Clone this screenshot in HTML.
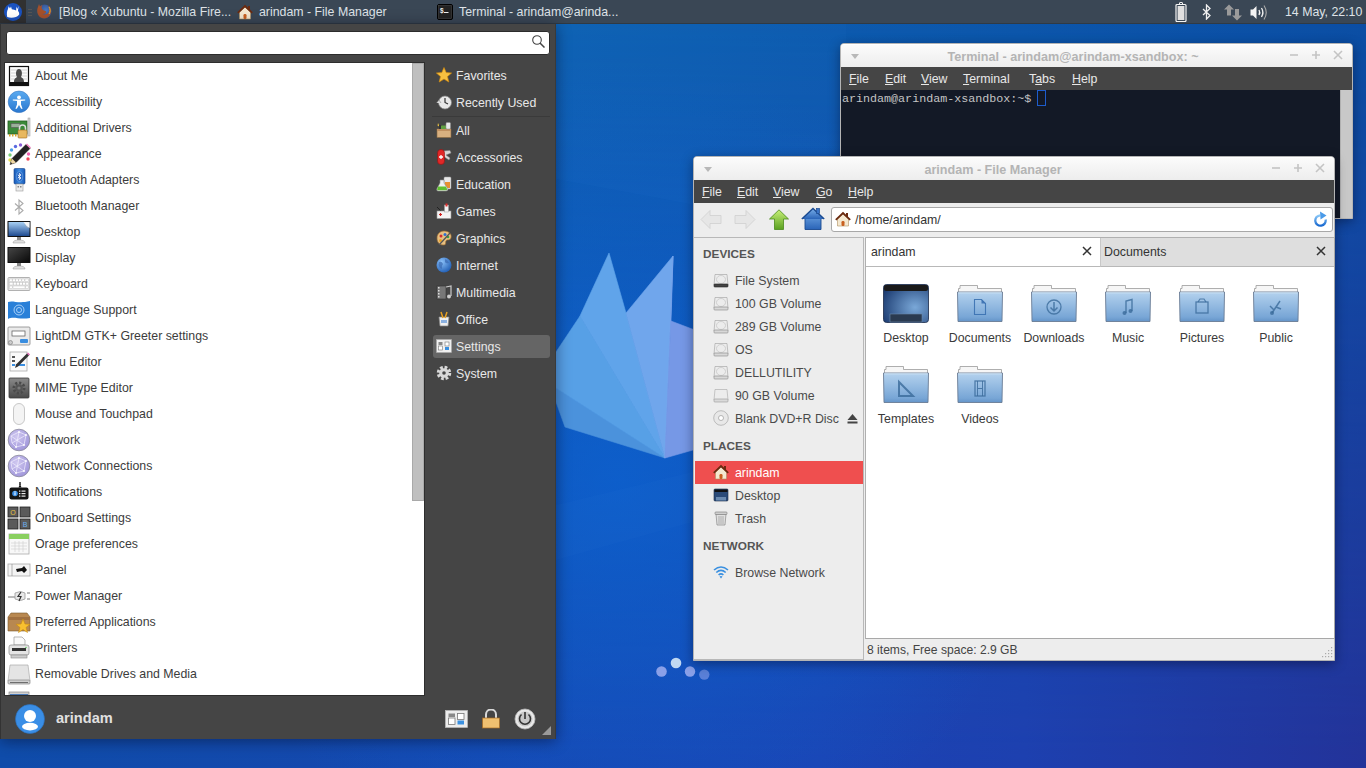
<!DOCTYPE html><html><head><meta charset="utf-8"><style>
*{margin:0;padding:0;box-sizing:border-box}
html,body{width:1366px;height:768px;overflow:hidden}
body{position:relative;font-family:"Liberation Sans",sans-serif;font-size:12.35px;color:#333;
background:linear-gradient(180deg,#0e5fb9 0%,#1260bf 35%,#1b4fb0 70%,#1e3c9c 100%);}
div,span,svg{position:absolute}
.t{white-space:nowrap;line-height:15px}
u{text-decoration:underline;text-decoration-thickness:1px;text-underline-offset:1px}
</style></head><body>
<svg style="left:0;top:0" width="1366" height="768">
 <defs>
  <linearGradient id="bgT" x1="0" y1="0" x2="1" y2="0"><stop offset="0" stop-color="#0e6ebc"/><stop offset="1" stop-color="#0a4fa4"/></linearGradient>
  <linearGradient id="bgB" x1="0" y1="0" x2="1" y2="0"><stop offset="0" stop-color="#104caa"/><stop offset="0.6" stop-color="#1c44b4"/><stop offset="0.75" stop-color="#1e40b0"/><stop offset="1" stop-color="#24339a"/></linearGradient>
  <linearGradient id="mv" x1="0" y1="0" x2="0" y2="1"><stop offset="0" stop-color="#fff"/><stop offset="1" stop-color="#000"/></linearGradient>
  <mask id="mk"><rect width="1366" height="768" fill="url(#mv)"/></mask>
 </defs>
 <rect width="1366" height="768" fill="url(#bgB)"/>
 <rect width="1366" height="768" fill="url(#bgT)" mask="url(#mk)"/>
 <radialGradient id="hl" cx="620" cy="480" r="420" gradientUnits="userSpaceOnUse"><stop offset="0" stop-color="#0a66d8" stop-opacity="0.65"/><stop offset="0.6" stop-color="#0a66d8" stop-opacity="0.25"/><stop offset="1" stop-color="#0a66d8" stop-opacity="0"/></radialGradient>
 <rect width="1366" height="768" fill="url(#hl)"/>
 <polygon points="556,505 700,470 700,520 556,560" fill="#5aa0f0" fill-opacity="0.03"/>
 <path d="M556 24 H846 V235 Q700 205 556 179 Z" fill="#60b0ff" fill-opacity="0.035"/>
 <g stroke-width="0.6" stroke-linejoin="round">
  <polygon points="665,458 565,427 556,402 556,388" fill="#4b92dc" stroke="#4b92dc"/>
  <polygon points="665,458 556,388 556,352 580,316" fill="#57a0e6" stroke="#57a0e6"/>
  <polygon points="665,458 580,316 609,253 626,313" fill="#60a4ea" stroke="#60a4ea"/>
  <polygon points="665,458 626,313 673,256" fill="#70a6ec" stroke="#70a6ec"/>
  <polygon points="665,458 673,256 671,321" fill="#7aa4ec" stroke="#7aa4ec"/>
  <polygon points="665,458 671,321 700,332 700,448" fill="#7698e6" stroke="#7698e6"/>
 </g>
 <circle cx="661.5" cy="671.5" r="5.3" fill="#8aa0e8"/>
 <circle cx="676" cy="663" r="5.3" fill="#c0d8f2"/>
 <circle cx="690" cy="671.5" r="5.2" fill="#8aa0e8"/>
 <circle cx="704.3" cy="674.6" r="5.2" fill="#5a80d8"/>
</svg>
<div style="left:0;top:0;width:1366px;height:24px;background:#3a4755;border-bottom:1px solid #2f3a45"></div>
<div style="left:0;top:0;width:26px;height:23px;background:#313131"></div>
<svg width="18" height="18" viewBox="0 0 18 18" style="position:absolute;left:4px;top:3px"><circle cx="9" cy="9" r="9" fill="#1a52c0"/><path d="M3.2 14 C2.5 10.5 3 7.5 4 6 L4.6 3.2 L6 5.6 L7 3.4 L7.8 6.2 C9.5 6.4 11 7 12.2 7.6 L12.3 3.6 L13.3 6 L14.6 3 L14 8 C15 9 15.4 10.4 15.2 11.5 C13 14.5 7.5 15.8 3.2 14 Z" fill="#fff"/></svg>
<div style="left:28px;top:9px;width:4px;height:1px;background:#555;box-shadow:0 3px 0 #555,0 6px 0 #555"></div>
<svg width="17" height="17" viewBox="0 0 17 17" style="position:absolute;left:36px;top:3px"><defs><radialGradient id="ffg" cx="0.6" cy="0.4" r="0.6"><stop offset="0" stop-color="#4a78c0"/><stop offset="1" stop-color="#2a4a8a"/></radialGradient></defs><circle cx="8.5" cy="8.5" r="7" fill="url(#ffg)"/><path d="M12.5 2.5 C15.5 4.5 16 9 14 12 C12 15.5 7 16.5 4 14 C1 11.5 0.5 7 2 4 L3 1 L4 3.5 C4.5 3 5.5 2.2 6.5 2 C5 4 5.5 6 7 7 C8 8 9.5 7.5 10 8.5 C10.5 10 8.5 11.5 6.5 11 C9 12.5 12.5 11 13 8.5 C13.5 6 12.5 4 12.5 2.5 Z" fill="#a4502a"/><path d="M13 4 C14.5 6 14.5 9 13 11" stroke="#d8b040" stroke-width="1" fill="none"/></svg>
<svg width="16" height="16" viewBox="0 0 16 16" style="position:absolute;left:237px;top:4px"><path d="M2.5 8 V15 H13.5 V8 L8 3 Z" fill="#f4e8d0" stroke="#b09060" stroke-width="0.6"/><path d="M0.8 8.8 L8 2 L15.2 8.8" stroke="#6a2a10" stroke-width="1.8" fill="none"/><rect x="11" y="2" width="2" height="4" fill="#6a2a10"/><rect x="6.5" y="10" width="3" height="5" rx="1.2" fill="#c86020"/></svg>
<svg width="16" height="16" viewBox="0 0 16 16" style="position:absolute;left:437px;top:4px"><rect x="0.5" y="0.5" width="15" height="15" rx="1.5" fill="#1a1a1a" stroke="#000" stroke-width="1"/><rect x="1.5" y="1.5" width="13" height="13" fill="#222" stroke="#555" stroke-width="0.4"/><text x="3" y="8.5" font-size="6.5" fill="#eee" font-family="Liberation Sans" font-weight="bold">$</text><rect x="7" y="8" width="4.5" height="1" fill="#eee"/></svg>
<div class="t" style="left:59px;top:5px;color:#dfe3e8">[Blog « Xubuntu - Mozilla Fire...</div>
<div class="t" style="left:259px;top:5px;color:#dfe3e8">arindam - File Manager</div>
<div class="t" style="left:459px;top:5px;color:#dfe3e8">Terminal - arindam@arinda...</div>
<div class="t" style="left:1285px;top:5px;color:#dfe3e8">14 May, 22:10</div>
<svg width="12" height="20" viewBox="0 0 12 20" style="position:absolute;left:1175px;top:2px"><rect x="4.5" y="0.5" width="3" height="2" rx="0.5" fill="none" stroke="#f0f0f0" stroke-width="1"/><rect x="1" y="2.5" width="10" height="17" rx="1" fill="none" stroke="#f4f4f4" stroke-width="1.2"/><rect x="2.6" y="4" width="6.8" height="14" fill="#e0e0e0"/></svg>
<svg width="10" height="16" viewBox="0 0 10 16" style="position:absolute;left:1202px;top:4px"><path d="M1 5 L8 11.5 L4.5 15 V1 L8 4.5 L1 11" stroke="#f0f0f0" stroke-width="1.3" fill="none"/></svg>
<svg width="18" height="17" viewBox="0 0 18 17" style="position:absolute;left:1224px;top:4px"><path d="M5 0.5 L10 5.5 H7 V11.5 H3 V5.5 H0 Z" fill="#9a9a9a"/><path d="M13 16.5 L8 11.5 H11 V5 H15 V11.5 H18 Z" fill="#9a9a9a"/></svg>
<svg width="19" height="17" viewBox="0 0 19 17" style="position:absolute;left:1250px;top:4px"><path d="M0.5 5.5 H3 L6.5 2 V15 L3 11.5 H0.5 Z" fill="#f4f4f4"/><path d="M9 6 Q10.5 8.5 9 11" stroke="#f4f4f4" stroke-width="1.4" fill="none"/><path d="M11.5 4 Q14.3 8.5 11.5 13" stroke="#f0f0f0" stroke-width="1.3" fill="none"/><path d="M14 1.5 Q18.5 8.5 14 15.5" stroke="#aaa" stroke-width="1.1" fill="none"/></svg>
<div style="left:0;top:24px;width:556px;height:715px;background:#454545;border-left:1px solid #333;border-right:1px solid #3a3a3a;box-shadow:0 2px 14px rgba(0,0,20,0.45)"></div>
<div style="left:6px;top:31px;width:544px;height:24px;background:#fff;border:1px solid #2c2c2c;border-radius:3px"></div>
<svg width="14" height="14" style="left:531px;top:35px"><circle cx="6" cy="5" r="4.3" fill="none" stroke="#444" stroke-width="1.1"/><path d="M9 8 L13.5 12.5" stroke="#444" stroke-width="1.5"/></svg>
<div style="left:4px;top:62px;width:421px;height:634px;background:#fff;border:1px solid #2e2e2e"></div>
<div style="left:412px;top:63px;width:12px;height:438px;background:#bfbfbf;border:1px solid #a9a9a9"></div>
<div style="left:5px;top:63px;width:407px;height:632px;overflow:hidden">
<svg width="24" height="24" viewBox="0 0 24 24" style="position:absolute;left:2px;top:1px"><rect x="2.5" y="2.5" width="19" height="19" fill="#fafafa" stroke="#111" stroke-width="1.2"/>
<g stroke="#c8c8c8" stroke-width="0.8"><line x1="4" y1="6" x2="20" y2="6"/><line x1="4" y1="9" x2="20" y2="9"/><line x1="4" y1="12" x2="20" y2="12"/><line x1="4" y1="15" x2="20" y2="15"/></g>
<path d="M7 18 C7 14 9 14 10 13 C8.5 11 8.5 5 12 5 C15.5 5 15.5 11 14 13 C15 14 17 14 17 18 Z" fill="#4a4a4a"/>
<rect x="3" y="18" width="18" height="3.5" fill="#111"/></svg>
<div class="t" style="left:30px;top:6px;color:#3c3c3c">About Me</div>
<svg width="24" height="24" viewBox="0 0 24 24" style="position:absolute;left:2px;top:27px"><defs><linearGradient id="acg" x1="0" y1="0" x2="0" y2="1"><stop offset="0" stop-color="#5aaaf0"/><stop offset="1" stop-color="#2a78d0"/></linearGradient></defs>
<circle cx="12" cy="11.8" r="10.8" fill="url(#acg)" stroke="#2a6ab8" stroke-width="0.5"/>
<circle cx="12" cy="7.3" r="1.9" fill="#fff"/>
<path d="M5.8 9.6 L11 9.6 L13 9.6 L18.2 9.6 L18.2 10.6 L14 11 L14 14.5 L15.6 18.8 L14.2 18.8 L12 15 L9.8 18.8 L8.4 18.8 L10 14.5 L10 11 L5.8 10.6 Z" fill="#fff"/></svg>
<div class="t" style="left:30px;top:32px;color:#3c3c3c">Accessibility</div>
<svg width="24" height="24" viewBox="0 0 24 24" style="position:absolute;left:2px;top:53px"><rect x="1" y="5" width="19" height="13" fill="#3c8a3a" stroke="#245c22" stroke-width="0.8"/>
<rect x="4" y="7.5" width="9" height="4" fill="#9ab09a" stroke="#555" stroke-width="0.6"/>
<rect x="21" y="2" width="2" height="18" fill="#d8d8d8" stroke="#999" stroke-width="0.5"/>
<g fill="#d6a830"><rect x="2" y="18" width="1.5" height="2.5"/><rect x="5" y="18" width="1.5" height="2.5"/><rect x="8" y="18" width="1.5" height="2.5"/></g>
<path d="M12.5 14 V12 A3 3 0 0 1 18.5 12 V14" stroke="#ddd" stroke-width="1.5" fill="none"/>
<rect x="11" y="14" width="9" height="8" rx="1" fill="#e8b860" stroke="#a06a20" stroke-width="0.6"/></svg>
<div class="t" style="left:30px;top:58px;color:#3c3c3c">Additional Drivers</div>
<svg width="24" height="24" viewBox="0 0 24 24" style="position:absolute;left:2px;top:79px"><g><circle cx="3" cy="13" r="1.7" fill="#7ad07a"/><circle cx="4.5" cy="8" r="1.7" fill="#4da0e8"/><circle cx="8.5" cy="4.5" r="1.7" fill="#5a6ae0"/><circle cx="3" cy="18" r="1.7" fill="#e8e050"/><circle cx="21.5" cy="12" r="1.7" fill="#f060b0"/><circle cx="21" cy="17" r="1.7" fill="#f04858"/><circle cx="13.5" cy="3" r="1.7" fill="#8a60d8"/></g>
<path d="M3 22.5 L5 16.5 L19 2.5 L23 6.5 L9 20.5 Z" fill="#222" stroke="#111" stroke-width="0.5"/>
<path d="M19 2.5 L23 6.5 L24 5.5 L20 1.5 Z" fill="#f080c0"/>
<path d="M3 22.5 L5 16.5 L9 20.5 Z" fill="#f0d8a8"/><path d="M3 22.5 L3.8 20 L5.5 21.7 Z" fill="#333"/></svg>
<div class="t" style="left:30px;top:84px;color:#3c3c3c">Appearance</div>
<svg width="24" height="24" viewBox="0 0 24 24" style="position:absolute;left:2px;top:105px"><defs><linearGradient id="bta" x1="0" y1="0" x2="1" y2="0"><stop offset="0" stop-color="#1a5ab8"/><stop offset="0.5" stop-color="#3a8ae0"/><stop offset="1" stop-color="#1a5ab8"/></linearGradient></defs>
<rect x="7" y="0.5" width="11" height="15.5" rx="1.2" fill="url(#bta)" stroke="#12428a" stroke-width="0.6"/>
<rect x="9" y="16" width="7" height="7" fill="#ececec" stroke="#999" stroke-width="0.6"/><rect x="10.5" y="18" width="1.5" height="1.5" fill="#888"/><rect x="13" y="18" width="1.5" height="1.5" fill="#888"/>
<ellipse cx="12.5" cy="8.5" rx="3.2" ry="4.8" fill="#2a6ac8" stroke="#9ac4f0" stroke-width="0.4"/>
<path d="M10.8 6.8 L14 10 L12.4 11.6 V5.4 L14 7 L10.8 10.2" stroke="#fff" stroke-width="0.8" fill="none"/></svg>
<div class="t" style="left:30px;top:110px;color:#3c3c3c">Bluetooth Adapters</div>
<svg width="24" height="24" viewBox="0 0 24 24" style="position:absolute;left:2px;top:131px"><path d="M8 9.5 L16 16.5 L12 20 V6 L16 9.5 L8 16.5" stroke="#aaa" stroke-width="1.1" fill="none"/></svg>
<div class="t" style="left:30px;top:136px;color:#3c3c3c">Bluetooth Manager</div>
<svg width="24" height="24" viewBox="0 0 24 24" style="position:absolute;left:2px;top:157px"><defs><linearGradient id="dkg" x1="0" y1="0" x2="0" y2="1"><stop offset="0" stop-color="#a8d0f4"/><stop offset="1" stop-color="#1e4a90"/></linearGradient></defs>
<rect x="0.5" y="1" width="23" height="16" rx="0.5" fill="#111"/>
<rect x="1.5" y="2" width="21" height="14" fill="url(#dkg)"/>
<path d="M16.5 2 H22.5 V8 Q19 6 16.5 2 Z" fill="#f4f4f4"/><path d="M16.5 2 Q17.5 6.5 22.5 8 Q18 8 16.5 2Z" fill="#aaa"/>
<rect x="10" y="17" width="4" height="3" fill="#888"/><path d="M6 23 Q6 20 12 20 Q18 20 18 23 Z" fill="#e0e0e0" stroke="#999" stroke-width="0.5"/></svg>
<div class="t" style="left:30px;top:162px;color:#3c3c3c">Desktop</div>
<svg width="24" height="24" viewBox="0 0 24 24" style="position:absolute;left:2px;top:183px"><defs><linearGradient id="dpg" x1="0" y1="0" x2="1" y2="1"><stop offset="0" stop-color="#444"/><stop offset="1" stop-color="#0a0a0a"/></linearGradient></defs>
<rect x="0.5" y="1" width="23" height="16" rx="0.5" fill="#111"/>
<rect x="1.5" y="2" width="21" height="14" fill="url(#dpg)"/>
<rect x="10" y="17" width="4" height="3" fill="#888"/><path d="M6 23 Q6 20 12 20 Q18 20 18 23 Z" fill="#e0e0e0" stroke="#999" stroke-width="0.5"/></svg>
<div class="t" style="left:30px;top:188px;color:#3c3c3c">Display</div>
<svg width="24" height="24" viewBox="0 0 24 24" style="position:absolute;left:2px;top:209px"><rect x="1" y="5.5" width="22" height="13" rx="1" fill="#e8e8e8" stroke="#a0a0a0" stroke-width="0.8"/>
<g fill="#fff" stroke="#bbb" stroke-width="0.4"><rect x="2.5" y="7" width="2.6" height="2.5"/><rect x="5.6" y="7" width="2.6" height="2.5"/><rect x="8.7" y="7" width="2.6" height="2.5"/><rect x="11.8" y="7" width="2.6" height="2.5"/><rect x="14.9" y="7" width="2.6" height="2.5"/><rect x="18" y="7" width="3.5" height="2.5"/>
<rect x="2.5" y="10.5" width="3.5" height="2.5"/><rect x="6.5" y="10.5" width="2.6" height="2.5"/><rect x="9.6" y="10.5" width="2.6" height="2.5"/><rect x="12.7" y="10.5" width="2.6" height="2.5"/><rect x="15.8" y="10.5" width="2.6" height="2.5"/><rect x="18.9" y="10.5" width="2.6" height="2.5"/>
<rect x="2.5" y="14" width="3" height="2.5"/><rect x="6" y="14" width="12" height="2.5"/><rect x="18.5" y="14" width="3" height="2.5"/></g></svg>
<div class="t" style="left:30px;top:214px;color:#3c3c3c">Keyboard</div>
<svg width="24" height="24" viewBox="0 0 24 24" style="position:absolute;left:2px;top:235px"><path d="M1 4 C6 2 11 6 23 3 V20 C12 22 7 18 1 21 Z" fill="#2a80d8"/>
<circle cx="12" cy="12" r="5" fill="none" stroke="#a8d0f8" stroke-width="1"/><circle cx="12" cy="12" r="2.5" fill="none" stroke="#a8d0f8" stroke-width="1"/></svg>
<div class="t" style="left:30px;top:240px;color:#3c3c3c">Language Support</div>
<svg width="24" height="24" viewBox="0 0 24 24" style="position:absolute;left:2px;top:261px"><rect x="1" y="3" width="22" height="18" rx="1" fill="#eaeaea" stroke="#888" stroke-width="0.8"/>
<rect x="5" y="7" width="13" height="5" fill="#fff" stroke="#555" stroke-width="0.7"/>
<rect x="13" y="15" width="8" height="4" rx="1" fill="#3a8ee0"/>
<circle cx="3.5" cy="18.5" r="2" fill="#ccc" stroke="#777" stroke-width="0.6"/></svg>
<div class="t" style="left:30px;top:266px;color:#3c3c3c">LightDM GTK+ Greeter settings</div>
<svg width="24" height="24" viewBox="0 0 24 24" style="position:absolute;left:2px;top:287px"><rect x="3" y="2" width="17" height="19" fill="#fafafa" stroke="#aaa" stroke-width="0.8"/>
<g fill="#555"><rect x="5" y="6" width="3" height="2"/><rect x="5" y="10" width="3" height="2"/></g>
<rect x="5" y="14" width="3" height="2" fill="#3a8ee0"/><rect x="9" y="14" width="9" height="2" fill="#3a8ee0"/>
<path d="M8 18 L9 14.5 L20 3.5 L22 5.5 L11 16.5 Z" fill="#333"/><path d="M20 3.5 L22 5.5 L23 4.5 L21 2.5 Z" fill="#e060b0"/></svg>
<div class="t" style="left:30px;top:292px;color:#3c3c3c">Menu Editor</div>
<svg width="24" height="24" viewBox="0 0 24 24" style="position:absolute;left:2px;top:313px"><defs><linearGradient id="mmg" x1="0" y1="0" x2="0" y2="1"><stop offset="0" stop-color="#8a8a8a"/><stop offset="1" stop-color="#4a4a4a"/></linearGradient></defs>
<rect x="2" y="2" width="20" height="20" rx="1" fill="url(#mmg)" stroke="#3a3a3a" stroke-width="0.8"/>
<circle cx="12" cy="12" r="5.2" fill="none" stroke="#4a4a4a" stroke-width="2.6" stroke-dasharray="2.1 1.9"/><circle cx="12" cy="12" r="3.8" fill="#555"/><circle cx="12" cy="12" r="1.6" fill="#7a7a7a"/></svg>
<div class="t" style="left:30px;top:318px;color:#3c3c3c">MIME Type Editor</div>
<svg width="24" height="24" viewBox="0 0 24 24" style="position:absolute;left:2px;top:339px"><rect x="6.5" y="1.5" width="11" height="21" rx="5.5" fill="#f4f4f4" stroke="#bbb" stroke-width="0.8"/></svg>
<div class="t" style="left:30px;top:344px;color:#3c3c3c">Mouse and Touchpad</div>
<svg width="24" height="24" viewBox="0 0 24 24" style="position:absolute;left:2px;top:365px"><defs><radialGradient id="ng1" cx="0.4" cy="0.35" r="0.75"><stop offset="0" stop-color="#d0c8f0"/><stop offset="1" stop-color="#9a90d8"/></radialGradient></defs>
<circle cx="12" cy="12" r="10.8" fill="url(#ng1)" stroke="#8a8a9a" stroke-width="0.8"/>
<g stroke="#f4f2ff" stroke-width="0.7" fill="none" opacity="0.95"><path d="M4 8 L12 4 L19 7 L17 17 L9 19 L5 15 Z"/><path d="M12 4 L9 19 M19 7 L5 15 M4 8 L17 17"/></g><g fill="#fff"><circle cx="12" cy="4" r="0.9"/><circle cx="19" cy="7" r="0.9"/><circle cx="17" cy="17" r="0.9"/><circle cx="9" cy="19" r="0.9"/></g></svg>
<div class="t" style="left:30px;top:370px;color:#3c3c3c">Network</div>
<svg width="24" height="24" viewBox="0 0 24 24" style="position:absolute;left:2px;top:391px"><defs><radialGradient id="ng2" cx="0.4" cy="0.35" r="0.75"><stop offset="0" stop-color="#d0c8f0"/><stop offset="1" stop-color="#9a90d8"/></radialGradient></defs>
<circle cx="12" cy="12" r="10.8" fill="url(#ng2)" stroke="#8a8a9a" stroke-width="0.8"/>
<g stroke="#f4f2ff" stroke-width="0.7" fill="none" opacity="0.95"><path d="M4 8 L12 4 L19 7 L17 17 L9 19 L5 15 Z"/><path d="M12 4 L9 19 M19 7 L5 15 M4 8 L17 17"/></g><g fill="#fff"><circle cx="12" cy="4" r="0.9"/><circle cx="19" cy="7" r="0.9"/><circle cx="17" cy="17" r="0.9"/><circle cx="9" cy="19" r="0.9"/></g></svg>
<div class="t" style="left:30px;top:396px;color:#3c3c3c">Network Connections</div>
<svg width="24" height="24" viewBox="0 0 24 24" style="position:absolute;left:2px;top:417px"><rect x="2.5" y="7.5" width="19" height="12" rx="2" fill="#141414"/>
<path d="M13 4 L14.5 7.5 H11.5 Z" fill="#141414"/><rect x="12.3" y="2" width="1.4" height="3" fill="#141414"/>
<circle cx="8" cy="13.5" r="2.8" fill="#3a90e8"/><rect x="7.5" y="12.3" width="1" height="3" fill="#fff"/><rect x="7.5" y="11.2" width="1" height="0.8" fill="#fff"/>
<g fill="#e8e8e8"><rect x="12" y="10.5" width="1.4" height="1.2"/><rect x="14.5" y="10.5" width="4" height="1.2"/><rect x="12" y="13" width="1.4" height="1.2"/><rect x="14.5" y="13" width="4" height="1.2"/><rect x="12" y="15.5" width="1.4" height="1.2"/><rect x="14.5" y="15.5" width="4" height="1.2"/></g></svg>
<div class="t" style="left:30px;top:422px;color:#3c3c3c">Notifications</div>
<svg width="24" height="24" viewBox="0 0 24 24" style="position:absolute;left:2px;top:443px"><g stroke="#222" stroke-width="0.8"><rect x="1" y="1" width="10" height="10" fill="#5a5a5a"/><rect x="13" y="1" width="10" height="10" fill="#5a5a5a"/><rect x="1" y="13" width="10" height="10" fill="#5a5a5a"/><rect x="13" y="13" width="10" height="10" fill="#5a5a5a"/></g>
<text x="6" y="9" font-size="7" fill="#e8c040" text-anchor="middle" font-family="Liberation Sans">O</text><text x="18" y="21" font-size="7" fill="#6ab0f0" text-anchor="middle" font-family="Liberation Sans">B</text></svg>
<div class="t" style="left:30px;top:448px;color:#3c3c3c">Onboard Settings</div>
<svg width="24" height="24" viewBox="0 0 24 24" style="position:absolute;left:2px;top:469px"><rect x="2" y="2" width="20" height="20" fill="#f8f8f8" stroke="#aaa" stroke-width="0.8"/><rect x="2" y="2" width="20" height="5" fill="#8ad060"/>
<g stroke="#ccc" stroke-width="0.6"><line x1="4" y1="11" x2="20" y2="11"/><line x1="4" y1="14" x2="20" y2="14"/><line x1="4" y1="17" x2="20" y2="17"/><line x1="8" y1="9" x2="8" y2="20"/><line x1="12" y1="9" x2="12" y2="20"/><line x1="16" y1="9" x2="16" y2="20"/></g></svg>
<div class="t" style="left:30px;top:474px;color:#3c3c3c">Orage preferences</div>
<svg width="24" height="24" viewBox="0 0 24 24" style="position:absolute;left:2px;top:495px"><rect x="1" y="6" width="22" height="12" fill="#f4f4f4" stroke="#aaa" stroke-width="0.8"/><line x1="5" y1="6" x2="5" y2="18" stroke="#888" stroke-width="0.6"/>
<path d="M9 11 L15 10 L17 8 L20 12 L17 15 L15 13 L10 14 Z" fill="#111"/></svg>
<div class="t" style="left:30px;top:500px;color:#3c3c3c">Panel</div>
<svg width="24" height="24" viewBox="0 0 24 24" style="position:absolute;left:2px;top:521px"><path d="M1 13 H8 M20 9 H23 M20 15 H23" stroke="#777" stroke-width="1"/><path d="M8 9 Q14 6 18 9 V15 Q14 18 8 15 Z" fill="#e8e8e8" stroke="#999" stroke-width="0.8"/><path d="M14 8 L11 12.5 H14 L12 17" stroke="#333" stroke-width="1.2" fill="none"/></svg>
<div class="t" style="left:30px;top:526px;color:#3c3c3c">Power Manager</div>
<svg width="24" height="24" viewBox="0 0 24 24" style="position:absolute;left:2px;top:547px"><path d="M1 7 L4 3 H20 L23 7 V21 H1 Z" fill="#b88850" stroke="#7a5a30" stroke-width="0.6"/><rect x="1" y="7" width="22" height="3" fill="#a07040"/>
<path d="M16 9 L18 14 L23 14.3 L19 17.5 L20.5 22.5 L16 19.5 L11.5 22.5 L13 17.5 L9 14.3 L14 14 Z" fill="#f8c030" stroke="#c88a10" stroke-width="0.6"/></svg>
<div class="t" style="left:30px;top:552px;color:#3c3c3c">Preferred Applications</div>
<svg width="24" height="24" viewBox="0 0 24 24" style="position:absolute;left:2px;top:573px"><path d="M7 1 H15 L18 4 V9 H7 Z" fill="#fafafa" stroke="#999" stroke-width="0.7"/><rect x="2" y="9" width="20" height="10" rx="2" fill="#e4e4e4" stroke="#888" stroke-width="0.7"/><rect x="5" y="12" width="14" height="3" fill="#333"/><rect x="4" y="19" width="16" height="3" fill="#ccc" stroke="#888" stroke-width="0.6"/><circle cx="19" cy="11.5" r="0.8" fill="#6c6"/></svg>
<div class="t" style="left:30px;top:578px;color:#3c3c3c">Printers</div>
<svg width="24" height="24" viewBox="0 0 24 24" style="position:absolute;left:2px;top:599px"><path d="M3 3 H21 L23 19 H1 Z" fill="#e4e4e4" stroke="#aaa" stroke-width="0.7"/><rect x="1" y="18" width="22" height="4" rx="1" fill="#d0d0d0" stroke="#888" stroke-width="0.7"/><rect x="3" y="20" width="18" height="0.8" fill="#555"/></svg>
<div class="t" style="left:30px;top:604px;color:#3c3c3c">Removable Drives and Media</div>
<svg width="24" height="24" viewBox="0 0 24 24" style="position:absolute;left:2px;top:625px"><rect x="2" y="4" width="20" height="16" fill="#d0d0d0" stroke="#888" stroke-width="0.7"/><rect x="3" y="6" width="18" height="12" fill="#4a7ab8"/></svg>
</div>
<div style="left:432px;top:116px;width:118px;height:1px;background:#3a3a3a"></div>
<div style="left:433px;top:335px;width:117px;height:23px;background:#656565;border-radius:3px"></div>
<svg width="16" height="16" viewBox="0 0 16 16" style="position:absolute;left:436px;top:67px"><path d="M8 0.5 L10.2 5.6 L15.6 6 L11.5 9.6 L12.8 15 L8 12.1 L3.2 15 L4.5 9.6 L0.4 6 L5.8 5.6 Z" fill="#f8c040" stroke="#d08a10" stroke-width="0.7"/></svg>
<div class="t" style="left:456px;top:69px;color:#e8e8e8">Favorites</div>
<svg width="16" height="16" viewBox="0 0 16 16" style="position:absolute;left:436px;top:94px"><circle cx="9" cy="8.5" r="6.5" fill="#e8e8e8" stroke="#888" stroke-width="0.7"/><path d="M9 4 V8.5 L12 10" stroke="#333" stroke-width="1.2" fill="none"/><path d="M0.5 9 L3 6 L5 9" fill="#ddd" stroke="#777" stroke-width="0.5"/></svg>
<div class="t" style="left:456px;top:96px;color:#e8e8e8">Recently Used</div>
<svg width="16" height="16" viewBox="0 0 16 16" style="position:absolute;left:436px;top:122px"><rect x="1" y="7" width="14" height="8.5" fill="#d8b080" stroke="#8a6a40" stroke-width="0.6"/><rect x="1" y="7" width="14" height="2" fill="#c09060"/><path d="M2 1 L4 5 L1.5 3.5 Z" fill="#e8c040"/><rect x="3" y="3" width="3" height="4" fill="#333"/><rect x="5" y="3.5" width="5" height="3.5" fill="#60a040"/><rect x="10" y="0.5" width="4.5" height="6.5" rx="1" fill="#e8e8e8" stroke="#888" stroke-width="0.5"/></svg>
<div class="t" style="left:456px;top:124px;color:#e8e8e8">All</div>
<svg width="16" height="16" viewBox="0 0 16 16" style="position:absolute;left:436px;top:149px"><path d="M7 2 L14 1.5 L15 4 L10 6 L14 9 L13 11 L7 7 Z" fill="#d8d8d8" stroke="#888" stroke-width="0.5"/><rect x="1.5" y="0.5" width="7" height="15" rx="3.5" fill="#e02828" stroke="#901010" stroke-width="0.6"/><path d="M5 6 V10 M3 8 H7" stroke="#fff" stroke-width="1.3"/></svg>
<div class="t" style="left:456px;top:151px;color:#e8e8e8">Accessories</div>
<svg width="16" height="16" viewBox="0 0 16 16" style="position:absolute;left:436px;top:176px"><rect x="8" y="1" width="7" height="12" rx="1" fill="#e8e8e8" stroke="#999" stroke-width="0.5"/><rect x="9" y="6" width="5" height="6" fill="#e89030"/><path d="M4 4 H8 V7 L12 13 Q12 15 10 15 H2 Q0.5 15 0.8 13 L4 7 Z" fill="#f0f0f0" stroke="#888" stroke-width="0.6"/><path d="M2.2 10.5 H9.8 L11.2 13.3 Q11 14.3 10 14.3 H2 Q1.2 14.3 1.2 13.3 Z" fill="#60c030"/></svg>
<div class="t" style="left:456px;top:178px;color:#e8e8e8">Education</div>
<svg width="16" height="16" viewBox="0 0 16 16" style="position:absolute;left:436px;top:203px"><path d="M1 4 L6 9" stroke="#222" stroke-width="1"/><rect x="1" y="8" width="14" height="7.5" fill="#f4f4f4" stroke="#999" stroke-width="0.6"/><rect x="8.5" y="2" width="4" height="7" fill="#f4f4f4" stroke="#999" stroke-width="0.5"/><rect x="9.5" y="0.5" width="2" height="3" fill="#e03030"/><path d="M4.5 10 V13 M3 11.5 H6" stroke="#d02020" stroke-width="1.2"/></svg>
<div class="t" style="left:456px;top:205px;color:#e8e8e8">Games</div>
<svg width="16" height="16" viewBox="0 0 16 16" style="position:absolute;left:436px;top:230px"><path d="M8 1 C14 1 16 5 15 8 C14 11 11 9 10 11 C9 13 11 15 7 15 C3 15 1 12 1 8 C1 4 4 1 8 1 Z" fill="#e8c080" stroke="#9a6a30" stroke-width="0.7"/><circle cx="5" cy="6" r="1.5" fill="#d03030"/><circle cx="9" cy="4.5" r="1.5" fill="#3070d0"/><circle cx="12" cy="7" r="1.3" fill="#40a040"/><circle cx="4.5" cy="10.5" r="1.5" fill="#e8a020"/><path d="M3 15 L14 3" stroke="#555" stroke-width="1.3"/></svg>
<div class="t" style="left:456px;top:232px;color:#e8e8e8">Graphics</div>
<svg width="16" height="16" viewBox="0 0 16 16" style="position:absolute;left:436px;top:257px"><defs><radialGradient id="ig" cx="0.35" cy="0.3" r="0.8"><stop offset="0" stop-color="#8ac0f8"/><stop offset="1" stop-color="#1a58b0"/></radialGradient></defs><circle cx="8" cy="8" r="7.5" fill="url(#ig)"/><path d="M3 5 Q6 4 7 7 Q5 9 6 12 Q3 11 2.5 8 Z M9 2 Q12 3 13 6 Q10 7 9 5 Z" fill="#3a6ab0" opacity="0.7"/></svg>
<div class="t" style="left:456px;top:259px;color:#e8e8e8">Internet</div>
<svg width="16" height="16" viewBox="0 0 16 16" style="position:absolute;left:436px;top:284px"><rect x="1" y="2" width="9" height="13" fill="#777" stroke="#333" stroke-width="0.6"/><g fill="#ddd"><rect x="2" y="3" width="1.5" height="1.5"/><rect x="2" y="6" width="1.5" height="1.5"/><rect x="2" y="9" width="1.5" height="1.5"/><rect x="2" y="12" width="1.5" height="1.5"/></g><path d="M10 3 L15 2 V12" stroke="#ccc" stroke-width="1.2" fill="none"/><circle cx="13" cy="12.5" r="2" fill="#ccc"/></svg>
<div class="t" style="left:456px;top:286px;color:#e8e8e8">Multimedia</div>
<svg width="16" height="16" viewBox="0 0 16 16" style="position:absolute;left:436px;top:311px"><path d="M3 6 H13 L12 15 H4 Z" fill="#eee" stroke="#888" stroke-width="0.7"/><path d="M5 1 L7 7 M11 1 L9 7" stroke="#e8a020" stroke-width="1.5"/><rect x="5" y="9" width="6" height="3" fill="#8ab0e0"/></svg>
<div class="t" style="left:456px;top:313px;color:#e8e8e8">Office</div>
<svg width="16" height="16" viewBox="0 0 16 16" style="position:absolute;left:436px;top:338px"><rect x="0.5" y="1.5" width="15" height="13" fill="#f0f0f0" stroke="#aaa" stroke-width="0.6"/><rect x="2.5" y="4" width="4" height="3" fill="#888"/><rect x="2.5" y="8" width="4" height="4" fill="#fff" stroke="#777" stroke-width="0.6"/><rect x="9" y="4" width="4" height="4" fill="#fff" stroke="#777" stroke-width="0.6"/><rect x="9" y="9" width="4" height="3" fill="#3a90e0"/></svg>
<div class="t" style="left:456px;top:340px;color:#e8e8e8">Settings</div>
<svg width="16" height="16" viewBox="0 0 16 16" style="position:absolute;left:436px;top:365px"><circle cx="8" cy="8" r="5.5" fill="none" stroke="#d8d8d8" stroke-width="3.5" stroke-dasharray="2.6 1.7"/><circle cx="8" cy="8" r="4.8" fill="#d8d8d8"/><circle cx="8" cy="8" r="1.8" fill="#454545"/></svg>
<div class="t" style="left:456px;top:367px;color:#e8e8e8">System</div>
<svg width="32" height="32" style="left:14px;top:703px"><circle cx="16" cy="16" r="14.5" fill="#3a8ee6" stroke="#2a70c0" stroke-width="0.6"/><circle cx="16" cy="13" r="6" fill="#fff"/><ellipse cx="16" cy="23.6" rx="8" ry="3.8" fill="#fff"/></svg>
<div class="t" style="left:56px;top:711px;font-weight:bold;color:#e0e0e0;font-size:14.6px">arindam</div>
<svg width="24" height="20" style="left:445px;top:710px"><rect x="0.5" y="0.5" width="22" height="17" fill="#ececec" stroke="#bbb" stroke-width="0.7"/><rect x="3.5" y="3.5" width="6.5" height="3.5" fill="#888"/><rect x="3.5" y="8" width="6.5" height="6.5" fill="#fff" stroke="#777" stroke-width="0.8"/><rect x="12.5" y="3.5" width="6.5" height="6" fill="#fff" stroke="#777" stroke-width="0.8"/><rect x="12.5" y="10.5" width="6.5" height="4" fill="#3a90e0"/></svg>
<svg width="18" height="20" style="left:482px;top:709px"><path d="M4 9 V5.5 A5 5 0 0 1 14 5.5 V9" stroke="#d8d8d8" stroke-width="2" fill="none"/><rect x="0.5" y="9" width="17" height="10" fill="#f0c070" stroke="#a86a20" stroke-width="0.7"/></svg>
<svg width="22" height="22" style="left:514px;top:708px"><circle cx="11" cy="11" r="10" fill="#e8e8e8" stroke="#bbb" stroke-width="0.8"/><circle cx="11" cy="11" r="7.5" fill="#c8c8c8"/><path d="M7.5 6.5 A5.5 5.5 0 1 0 14.5 6.5" stroke="#333" stroke-width="1.6" fill="none"/><path d="M11 4 V11" stroke="#333" stroke-width="1.6"/></svg>
<svg width="12" height="12" style="left:541px;top:725px"><path d="M10 1 V10 H1 Z" fill="#9a9a9a"/></svg>
<div style="left:840px;top:43px;width:513px;height:176px;background:#ededed;border:1px solid #b4b4b4;border-radius:4px 4px 0 0;box-shadow:0 3px 12px rgba(0,0,20,0.4)"></div>
<div style="left:841px;top:44px;width:511px;height:23px;background:linear-gradient(#fbfbfb,#ededed);border-top:1px solid #fff;border-radius:3px 3px 0 0"></div>
<div class="t" style="left:873px;width:400px;top:50px;text-align:center;font-weight:bold;color:#b4b4b4;font-size:12.6px">Terminal - arindam@arindam-xsandbox: ~</div>
<svg width="9" height="6" style="left:851px;top:54px"><path d="M0 0 H8 L4 5 Z" fill="#b8b8b8"/></svg>
<svg width="70" height="12" style="left:1289px;top:50px"><path d="M1 5 H9" stroke="#c4c4c4" stroke-width="1.6"/><path d="M23 5 H31 M27 1 V9" stroke="#c4c4c4" stroke-width="1.6"/><path d="M45 1 L53 9 M53 1 L45 9" stroke="#c4c4c4" stroke-width="1.6"/></svg>
<div style="left:841px;top:67px;width:511px;height:23px;background:#454545"></div>
<div class="t" style="left:849px;top:72px;color:#e8e8e8"><u>F</u>ile</div>
<div class="t" style="left:885px;top:72px;color:#e8e8e8"><u>E</u>dit</div>
<div class="t" style="left:921px;top:72px;color:#e8e8e8"><u>V</u>iew</div>
<div class="t" style="left:963px;top:72px;color:#e8e8e8"><u>T</u>erminal</div>
<div class="t" style="left:1029px;top:72px;color:#e8e8e8">T<u>a</u>bs</div>
<div class="t" style="left:1072px;top:72px;color:#e8e8e8"><u>H</u>elp</div>
<div style="left:841px;top:90px;width:499px;height:128px;background:#131926"></div>
<div style="left:1340px;top:90px;width:12px;height:128px;background:#c8c8c8;border-left:1px solid #b0b0b0"></div>
<div class="t" style="left:842px;top:91px;font-family:'Liberation Mono',monospace;font-size:11.7px;color:#c4c4c4;line-height:16px">arindam@arindam-xsandbox:~$ </div>
<div style="left:1037px;top:90px;width:9px;height:16px;border:1px solid #1e5ccc"></div>
<div style="left:693px;top:156px;width:642px;height:505px;background:#ededed;border:1px solid #b4b4b4;border-radius:4px 4px 0 0;box-shadow:0 3px 12px rgba(0,0,20,0.4)"></div>
<div style="left:694px;top:157px;width:640px;height:23px;background:linear-gradient(#fbfbfb,#ededed);border-top:1px solid #fff;border-radius:3px 3px 0 0"></div>
<div class="t" style="left:793px;width:400px;top:163px;text-align:center;font-weight:bold;color:#b4b4b4;font-size:12.6px">arindam - File Manager</div>
<svg width="9" height="6" style="left:704px;top:167px"><path d="M0 0 H8 L4 5 Z" fill="#b8b8b8"/></svg>
<svg width="70" height="12" style="left:1271px;top:163px"><path d="M1 5 H9" stroke="#c4c4c4" stroke-width="1.6"/><path d="M23 5 H31 M27 1 V9" stroke="#c4c4c4" stroke-width="1.6"/><path d="M45 1 L53 9 M53 1 L45 9" stroke="#c4c4c4" stroke-width="1.6"/></svg>
<div style="left:694px;top:180px;width:640px;height:23px;background:#454545"></div>
<div class="t" style="left:702px;top:185px;color:#e8e8e8"><u>F</u>ile</div>
<div class="t" style="left:737px;top:185px;color:#e8e8e8"><u>E</u>dit</div>
<div class="t" style="left:773px;top:185px;color:#e8e8e8"><u>V</u>iew</div>
<div class="t" style="left:816px;top:185px;color:#e8e8e8"><u>G</u>o</div>
<div class="t" style="left:848px;top:185px;color:#e8e8e8"><u>H</u>elp</div>
<svg width="22" height="21" viewBox="0 0 22 21" style="position:absolute;left:700px;top:209px"><path d="M1 10.5 L10 1.5 V6.5 H21 V14.5 H10 V19.5 Z" fill="#e6e6e6" stroke="#cfcfcf" stroke-width="0.8"/></svg>
<svg width="22" height="21" viewBox="0 0 22 21" style="position:absolute;left:734px;top:209px"><path d="M21 10.5 L12 1.5 V6.5 H1 V14.5 H12 V19.5 Z" fill="#e6e6e6" stroke="#cfcfcf" stroke-width="0.8"/></svg>
<svg width="20" height="21.5" viewBox="0 0 20 21.5" style="position:absolute;left:769px;top:209px"><defs><linearGradient id="upg" x1="0" y1="0" x2="0" y2="1"><stop offset="0" stop-color="#c8f078"/><stop offset="1" stop-color="#5aa020"/></linearGradient></defs><path d="M10 0.8 L19.5 10 H14.5 V20.5 H5.5 V10 H0.5 Z" fill="url(#upg)" stroke="#4a8a1a" stroke-width="0.8"/></svg>
<svg width="24" height="24" viewBox="0 0 24 24" style="position:absolute;left:801px;top:207px"><defs><linearGradient id="hmg" x1="0" y1="0" x2="0" y2="1"><stop offset="0" stop-color="#7ab0ea"/><stop offset="1" stop-color="#2a64b8"/></linearGradient></defs><path d="M4 11 V22.5 H20 V11 L12 3 Z" fill="url(#hmg)" stroke="#1a4a90" stroke-width="0.9"/><path d="M0.8 12 L12 1.5 L23.2 12" stroke="#1a4a90" stroke-width="1.4" fill="url(#hmg)"/><rect x="15.5" y="1.5" width="3" height="5" fill="#3a74c8" stroke="#1a4a90" stroke-width="0.7"/></svg>
<div style="left:831px;top:207px;width:502px;height:25px;background:#fff;border:1px solid #a8a8a8;border-radius:3px"></div>
<svg width="16" height="16" viewBox="0 0 16 16" style="position:absolute;left:835px;top:211px"><path d="M2.5 8 V15 H13.5 V8 L8 3 Z" fill="#f4e8d0" stroke="#b09060" stroke-width="0.6"/><path d="M0.8 8.8 L8 2 L15.2 8.8" stroke="#6a2a10" stroke-width="1.8" fill="none"/><rect x="11" y="2" width="2" height="4" fill="#6a2a10"/><rect x="6.5" y="10" width="3" height="5" rx="1.2" fill="#c86020"/></svg>
<svg width="16" height="16" viewBox="0 0 16 16" style="position:absolute;left:1312px;top:211px"><defs><linearGradient id="rlg" x1="0" y1="0" x2="0" y2="1"><stop offset="0" stop-color="#8ac8f8"/><stop offset="1" stop-color="#1a6ad0"/></linearGradient></defs><path d="M13.6 8.5 A5.2 5.2 0 1 1 8.2 4.3" stroke="url(#rlg)" stroke-width="2.3" fill="none"/><path d="M8 0.5 L14.5 4.5 L8.5 8.5 Z" fill="#4a9ae8"/></svg>
<div class="t" style="left:855px;top:213px;color:#333">/home/arindam/</div>
<div style="left:694px;top:237px;width:170px;height:423px;border:1px solid #b8b8b8;border-left:none;background:#ededed"></div>
<div style="left:865px;top:237px;width:470px;height:402px;background:#fff;border:1px solid #b0b0b0;border-right-color:#a8a8a8;border-bottom-color:#a8a8a8"></div>
<div style="left:1100px;top:238px;width:234px;height:29px;background:#dedede;border-bottom:1px solid #b8b8b8;border-left:1px solid #c8c8c8"></div>
<div style="left:866px;top:266px;width:234px;height:1px;background:#b8b8b8"></div>
<div class="t" style="left:871px;top:245px">arindam</div>
<div class="t" style="left:1104px;top:245px">Documents</div>
<svg width="10" height="10" style="left:1082px;top:246px"><path d="M1 1 L9 9 M9 1 L1 9" stroke="#333" stroke-width="1.5"/></svg>
<svg width="10" height="10" style="left:1316px;top:246px"><path d="M1 1 L9 9 M9 1 L1 9" stroke="#333" stroke-width="1.5"/></svg>
<div class="t" style="left:867px;top:643px;color:#444;font-size:12.1px">8 items, Free space: 2.9 GB</div>
<svg width="12" height="12" style="left:1322px;top:647px"><g fill="#aaa"><rect x="9" y="0" width="1.2" height="1.2"/><rect x="6" y="3" width="1.2" height="1.2"/><rect x="9" y="3" width="1.2" height="1.2"/><rect x="3" y="6" width="1.2" height="1.2"/><rect x="6" y="6" width="1.2" height="1.2"/><rect x="9" y="6" width="1.2" height="1.2"/><rect x="0" y="9" width="1.2" height="1.2"/><rect x="3" y="9" width="1.2" height="1.2"/><rect x="6" y="9" width="1.2" height="1.2"/><rect x="9" y="9" width="1.2" height="1.2"/></g></svg>
<div class="t" style="left:703px;top:247px;font-weight:bold;color:#555;font-size:11.8px">DEVICES</div>
<div class="t" style="left:703px;top:439px;font-weight:bold;color:#555;font-size:11.8px">PLACES</div>
<div class="t" style="left:703px;top:539px;font-weight:bold;color:#555;font-size:11.8px">NETWORK</div>
<div style="left:695px;top:461px;width:168px;height:23px;background:#ef4f4f"></div>
<svg width="16" height="16" viewBox="0 0 16 16" style="position:absolute;left:713px;top:272px"><path d="M2 2.5 H14 L15 13 H1 Z" fill="#ececec" stroke="#a0a0a0" stroke-width="0.6"/><ellipse cx="8" cy="7.5" rx="4.5" ry="4" fill="none" stroke="#c8c8c8" stroke-width="0.8"/><rect x="1" y="12" width="14" height="3" rx="0.8" fill="#444" stroke="#222" stroke-width="0.6"/></svg>
<div class="t" style="left:735px;top:274px;color:#4a4a4a">File System</div>
<svg width="16" height="16" viewBox="0 0 16 16" style="position:absolute;left:713px;top:295px"><path d="M2 2.5 H14 L15 13 H1 Z" fill="#ececec" stroke="#a0a0a0" stroke-width="0.6"/><ellipse cx="8" cy="7.5" rx="4.5" ry="4" fill="none" stroke="#c8c8c8" stroke-width="0.8"/><rect x="1" y="12" width="14" height="3" rx="0.8" fill="#d8d8d8" stroke="#888" stroke-width="0.6"/></svg>
<div class="t" style="left:735px;top:297px;color:#4a4a4a">100 GB Volume</div>
<svg width="16" height="16" viewBox="0 0 16 16" style="position:absolute;left:713px;top:318px"><path d="M2 2.5 H14 L15 13 H1 Z" fill="#ececec" stroke="#a0a0a0" stroke-width="0.6"/><ellipse cx="8" cy="7.5" rx="4.5" ry="4" fill="none" stroke="#c8c8c8" stroke-width="0.8"/><rect x="1" y="12" width="14" height="3" rx="0.8" fill="#d8d8d8" stroke="#888" stroke-width="0.6"/></svg>
<div class="t" style="left:735px;top:320px;color:#4a4a4a">289 GB Volume</div>
<svg width="16" height="16" viewBox="0 0 16 16" style="position:absolute;left:713px;top:341px"><path d="M2 2.5 H14 L15 13 H1 Z" fill="#ececec" stroke="#a0a0a0" stroke-width="0.6"/><ellipse cx="8" cy="7.5" rx="4.5" ry="4" fill="none" stroke="#c8c8c8" stroke-width="0.8"/><rect x="1" y="12" width="14" height="3" rx="0.8" fill="#d8d8d8" stroke="#888" stroke-width="0.6"/></svg>
<div class="t" style="left:735px;top:343px;color:#4a4a4a">OS</div>
<svg width="16" height="16" viewBox="0 0 16 16" style="position:absolute;left:713px;top:364px"><path d="M2 2.5 H14 L15 13 H1 Z" fill="#ececec" stroke="#a0a0a0" stroke-width="0.6"/><ellipse cx="8" cy="7.5" rx="4.5" ry="4" fill="none" stroke="#c8c8c8" stroke-width="0.8"/><rect x="1" y="12" width="14" height="3" rx="0.8" fill="#d8d8d8" stroke="#888" stroke-width="0.6"/></svg>
<div class="t" style="left:735px;top:366px;color:#4a4a4a">DELLUTILITY</div>
<svg width="16" height="16" viewBox="0 0 16 16" style="position:absolute;left:713px;top:387px"><path d="M2 2.5 H14 L15 13 H1 Z" fill="#ececec" stroke="#a8a8a8" stroke-width="0.6"/><rect x="1" y="12" width="14" height="3" rx="0.8" fill="#dadada" stroke="#999" stroke-width="0.6"/></svg>
<div class="t" style="left:735px;top:389px;color:#4a4a4a">90 GB Volume</div>
<svg width="16" height="16" viewBox="0 0 16 16" style="position:absolute;left:713px;top:410px"><circle cx="8" cy="8" r="7.3" fill="#e8e8e8" stroke="#a8a8a8" stroke-width="0.7"/><circle cx="8" cy="8" r="2.5" fill="#fff" stroke="#999" stroke-width="0.7"/></svg>
<div class="t" style="left:735px;top:412px;color:#4a4a4a">Blank DVD+R Disc</div>
<svg width="16" height="16" viewBox="0 0 16 16" style="position:absolute;left:713px;top:464px"><path d="M2.5 8 V15 H13.5 V8 L8 3 Z" fill="#f4e8d0" stroke="#b09060" stroke-width="0.6"/><path d="M0.8 8.8 L8 2 L15.2 8.8" stroke="#6a2a10" stroke-width="1.8" fill="none"/><rect x="11" y="2" width="2" height="4" fill="#6a2a10"/><rect x="6.5" y="10" width="3" height="5" rx="1.2" fill="#c86020"/></svg>
<div class="t" style="left:735px;top:466px;color:#fff">arindam</div>
<svg width="16" height="16" viewBox="0 0 16 16" style="position:absolute;left:713px;top:487px"><rect x="1" y="2" width="14" height="12" rx="1" fill="#2a4a78" stroke="#1a2a44" stroke-width="0.6"/><rect x="1.5" y="2.5" width="13" height="2.5" fill="#111"/><rect x="3" y="10" width="10" height="3.5" fill="#6a8ab0"/></svg>
<div class="t" style="left:735px;top:489px;color:#4a4a4a">Desktop</div>
<svg width="16" height="16" viewBox="0 0 16 16" style="position:absolute;left:713px;top:510px"><path d="M3 4 H13 L12 15 H4 Z" fill="#e0e0e0" stroke="#888" stroke-width="0.7"/><rect x="2" y="2" width="12" height="2.5" rx="0.8" fill="#d0d0d0" stroke="#777" stroke-width="0.6"/><g stroke="#999" stroke-width="0.7"><line x1="6" y1="6" x2="6" y2="14"/><line x1="8" y1="6" x2="8" y2="14"/><line x1="10" y1="6" x2="10" y2="14"/></g></svg>
<div class="t" style="left:735px;top:512px;color:#4a4a4a">Trash</div>
<svg width="16" height="16" viewBox="0 0 16 16" style="position:absolute;left:713px;top:564px"><path d="M1 6 Q8 0 15 6" stroke="#3a90e0" stroke-width="1.6" fill="none"/><path d="M3.3 8.5 Q8 4.2 12.7 8.5" stroke="#3a90e0" stroke-width="1.6" fill="none"/><path d="M5.6 11 Q8 8.6 10.4 11" stroke="#3a90e0" stroke-width="1.6" fill="none"/><path d="M6.5 12.5 L8 14.5 L9.5 12.5 Q8 11.5 6.5 12.5 Z" fill="#3a90e0"/></svg>
<div class="t" style="left:735px;top:566px;color:#4a4a4a">Browse Network</div>
<svg width="13" height="13" viewBox="0 0 13 13" style="position:absolute;left:846px;top:412px"><path d="M1.5 8 L6.5 2 L11.5 8 Z" fill="#444"/><rect x="1.5" y="9.5" width="10" height="2" fill="#444"/></svg>
<svg width="48" height="40" viewBox="0 0 48 40" style="position:absolute;left:882px;top:284px"><defs><radialGradient id="dsk" cx="0.7" cy="0.6" r="0.8"><stop offset="0" stop-color="#7aa8d8"/><stop offset="1" stop-color="#1a3a70"/></radialGradient></defs>
<rect x="1.5" y="0.5" width="45" height="38" rx="3" fill="url(#dsk)" stroke="#1a2a48" stroke-width="0.8"/>
<rect x="2" y="1" width="44" height="6" rx="2" fill="#1a1a1a"/>
<rect x="8" y="30" width="32" height="8" fill="#2a3a50" stroke="#6a88a8" stroke-width="0.6"/></svg>
<div class="t" style="left:861px;width:90px;text-align:center;top:331px;color:#3a3a3a">Desktop</div>
<svg width="48" height="40" viewBox="0 0 48 40" style="position:absolute;left:956px;top:284px"><defs><linearGradient id="fgdoc" x1="0" y1="0" x2="0" y2="1"><stop offset="0" stop-color="#b4d2ee"/><stop offset="0.85" stop-color="#78a6d6"/><stop offset="1" stop-color="#6494c8"/></linearGradient></defs>
<path d="M2.5 4.5 H4 V1.5 H21.5 V4.5 H45.5 V12 H2.5 Z" fill="#f6f6f6" stroke="#9a9a9a" stroke-width="0.8"/>
<path d="M1.5 8 H46.5 L46 37.5 H2 Z" fill="url(#fgdoc)" stroke="#6a7c94" stroke-width="0.9"/>
<path d="M2.2 8.8 H45.8" stroke="#d4e6f6" stroke-width="0.9"/><path d="M18.5 15.5 H25.5 L29.5 19.5 V30.5 H18.5 Z" fill="none" stroke="#3a70b0" stroke-width="1.1" opacity="0.9"/><path d="M25.5 15.5 V19.5 H29.5 Z" fill="#3a70b0" opacity="0.9"/></svg>
<div class="t" style="left:935px;width:90px;text-align:center;top:331px;color:#3a3a3a">Documents</div>
<svg width="48" height="40" viewBox="0 0 48 40" style="position:absolute;left:1030px;top:284px"><defs><linearGradient id="fgdl" x1="0" y1="0" x2="0" y2="1"><stop offset="0" stop-color="#b4d2ee"/><stop offset="0.85" stop-color="#78a6d6"/><stop offset="1" stop-color="#6494c8"/></linearGradient></defs>
<path d="M2.5 4.5 H4 V1.5 H21.5 V4.5 H45.5 V12 H2.5 Z" fill="#f6f6f6" stroke="#9a9a9a" stroke-width="0.8"/>
<path d="M1.5 8 H46.5 L46 37.5 H2 Z" fill="url(#fgdl)" stroke="#6a7c94" stroke-width="0.9"/>
<path d="M2.2 8.8 H45.8" stroke="#d4e6f6" stroke-width="0.9"/><circle cx="24" cy="23" r="7" fill="none" stroke="#3a6a9a" stroke-width="1.3" opacity="0.8"/><path d="M24 18 V27 M20.5 23.5 L24 27 L27.5 23.5" stroke="#3a6a9a" stroke-width="1.5" fill="none" opacity="0.8"/></svg>
<div class="t" style="left:1009px;width:90px;text-align:center;top:331px;color:#3a3a3a">Downloads</div>
<svg width="48" height="40" viewBox="0 0 48 40" style="position:absolute;left:1104px;top:284px"><defs><linearGradient id="fgmusic" x1="0" y1="0" x2="0" y2="1"><stop offset="0" stop-color="#b4d2ee"/><stop offset="0.85" stop-color="#78a6d6"/><stop offset="1" stop-color="#6494c8"/></linearGradient></defs>
<path d="M2.5 4.5 H4 V1.5 H21.5 V4.5 H45.5 V12 H2.5 Z" fill="#f6f6f6" stroke="#9a9a9a" stroke-width="0.8"/>
<path d="M1.5 8 H46.5 L46 37.5 H2 Z" fill="url(#fgmusic)" stroke="#6a7c94" stroke-width="0.9"/>
<path d="M2.2 8.8 H45.8" stroke="#d4e6f6" stroke-width="0.9"/><path d="M22 29 V17 L28 15.5 V27" stroke="#3a6a9a" stroke-width="1.4" fill="none" opacity="0.8"/><circle cx="20.5" cy="29" r="2" fill="#3a6a9a" opacity="0.8"/><circle cx="26.5" cy="27" r="2" fill="#3a6a9a" opacity="0.8"/></svg>
<div class="t" style="left:1083px;width:90px;text-align:center;top:331px;color:#3a3a3a">Music</div>
<svg width="48" height="40" viewBox="0 0 48 40" style="position:absolute;left:1178px;top:284px"><defs><linearGradient id="fgpic" x1="0" y1="0" x2="0" y2="1"><stop offset="0" stop-color="#b4d2ee"/><stop offset="0.85" stop-color="#78a6d6"/><stop offset="1" stop-color="#6494c8"/></linearGradient></defs>
<path d="M2.5 4.5 H4 V1.5 H21.5 V4.5 H45.5 V12 H2.5 Z" fill="#f6f6f6" stroke="#9a9a9a" stroke-width="0.8"/>
<path d="M1.5 8 H46.5 L46 37.5 H2 Z" fill="url(#fgpic)" stroke="#6a7c94" stroke-width="0.9"/>
<path d="M2.2 8.8 H45.8" stroke="#d4e6f6" stroke-width="0.9"/><rect x="18" y="18" width="12" height="11" fill="none" stroke="#3a6a9a" stroke-width="1.3" opacity="0.8"/><path d="M20 18 L22 15 H26 L28 18" stroke="#3a6a9a" stroke-width="1.2" fill="none" opacity="0.8"/></svg>
<div class="t" style="left:1157px;width:90px;text-align:center;top:331px;color:#3a3a3a">Pictures</div>
<svg width="48" height="40" viewBox="0 0 48 40" style="position:absolute;left:1252px;top:284px"><defs><linearGradient id="fgpub" x1="0" y1="0" x2="0" y2="1"><stop offset="0" stop-color="#b4d2ee"/><stop offset="0.85" stop-color="#78a6d6"/><stop offset="1" stop-color="#6494c8"/></linearGradient></defs>
<path d="M2.5 4.5 H4 V1.5 H21.5 V4.5 H45.5 V12 H2.5 Z" fill="#f6f6f6" stroke="#9a9a9a" stroke-width="0.8"/>
<path d="M1.5 8 H46.5 L46 37.5 H2 Z" fill="url(#fgpub)" stroke="#6a7c94" stroke-width="0.9"/>
<path d="M2.2 8.8 H45.8" stroke="#d4e6f6" stroke-width="0.9"/><path d="M20 29 L28 17 M24 23 L29 25 M22 26 L18 22" stroke="#3a6a9a" stroke-width="1.5" fill="none" opacity="0.8"/><circle cx="20" cy="29" r="2" fill="#3a6a9a" opacity="0.8"/></svg>
<div class="t" style="left:1231px;width:90px;text-align:center;top:331px;color:#3a3a3a">Public</div>
<svg width="48" height="40" viewBox="0 0 48 40" style="position:absolute;left:882px;top:365px"><defs><linearGradient id="fgtpl" x1="0" y1="0" x2="0" y2="1"><stop offset="0" stop-color="#b4d2ee"/><stop offset="0.85" stop-color="#78a6d6"/><stop offset="1" stop-color="#6494c8"/></linearGradient></defs>
<path d="M2.5 4.5 H4 V1.5 H21.5 V4.5 H45.5 V12 H2.5 Z" fill="#f6f6f6" stroke="#9a9a9a" stroke-width="0.8"/>
<path d="M1.5 8 H46.5 L46 37.5 H2 Z" fill="url(#fgtpl)" stroke="#6a7c94" stroke-width="0.9"/>
<path d="M2.2 8.8 H45.8" stroke="#d4e6f6" stroke-width="0.9"/><path d="M17 31 V17 L31 31 Z" fill="none" stroke="#3a6a9a" stroke-width="2" opacity="0.8"/></svg>
<div class="t" style="left:861px;width:90px;text-align:center;top:412px;color:#3a3a3a">Templates</div>
<svg width="48" height="40" viewBox="0 0 48 40" style="position:absolute;left:956px;top:365px"><defs><linearGradient id="fgvid" x1="0" y1="0" x2="0" y2="1"><stop offset="0" stop-color="#b4d2ee"/><stop offset="0.85" stop-color="#78a6d6"/><stop offset="1" stop-color="#6494c8"/></linearGradient></defs>
<path d="M2.5 4.5 H4 V1.5 H21.5 V4.5 H45.5 V12 H2.5 Z" fill="#f6f6f6" stroke="#9a9a9a" stroke-width="0.8"/>
<path d="M1.5 8 H46.5 L46 37.5 H2 Z" fill="url(#fgvid)" stroke="#6a7c94" stroke-width="0.9"/>
<path d="M2.2 8.8 H45.8" stroke="#d4e6f6" stroke-width="0.9"/><rect x="19" y="16" width="10" height="15" fill="none" stroke="#3a6a9a" stroke-width="1.3" opacity="0.8"/><path d="M21.5 16 V31 M26.5 16 V31 M21.5 23.5 H26.5" stroke="#3a6a9a" stroke-width="1" opacity="0.8"/></svg>
<div class="t" style="left:935px;width:90px;text-align:center;top:412px;color:#3a3a3a">Videos</div>
</body></html>
